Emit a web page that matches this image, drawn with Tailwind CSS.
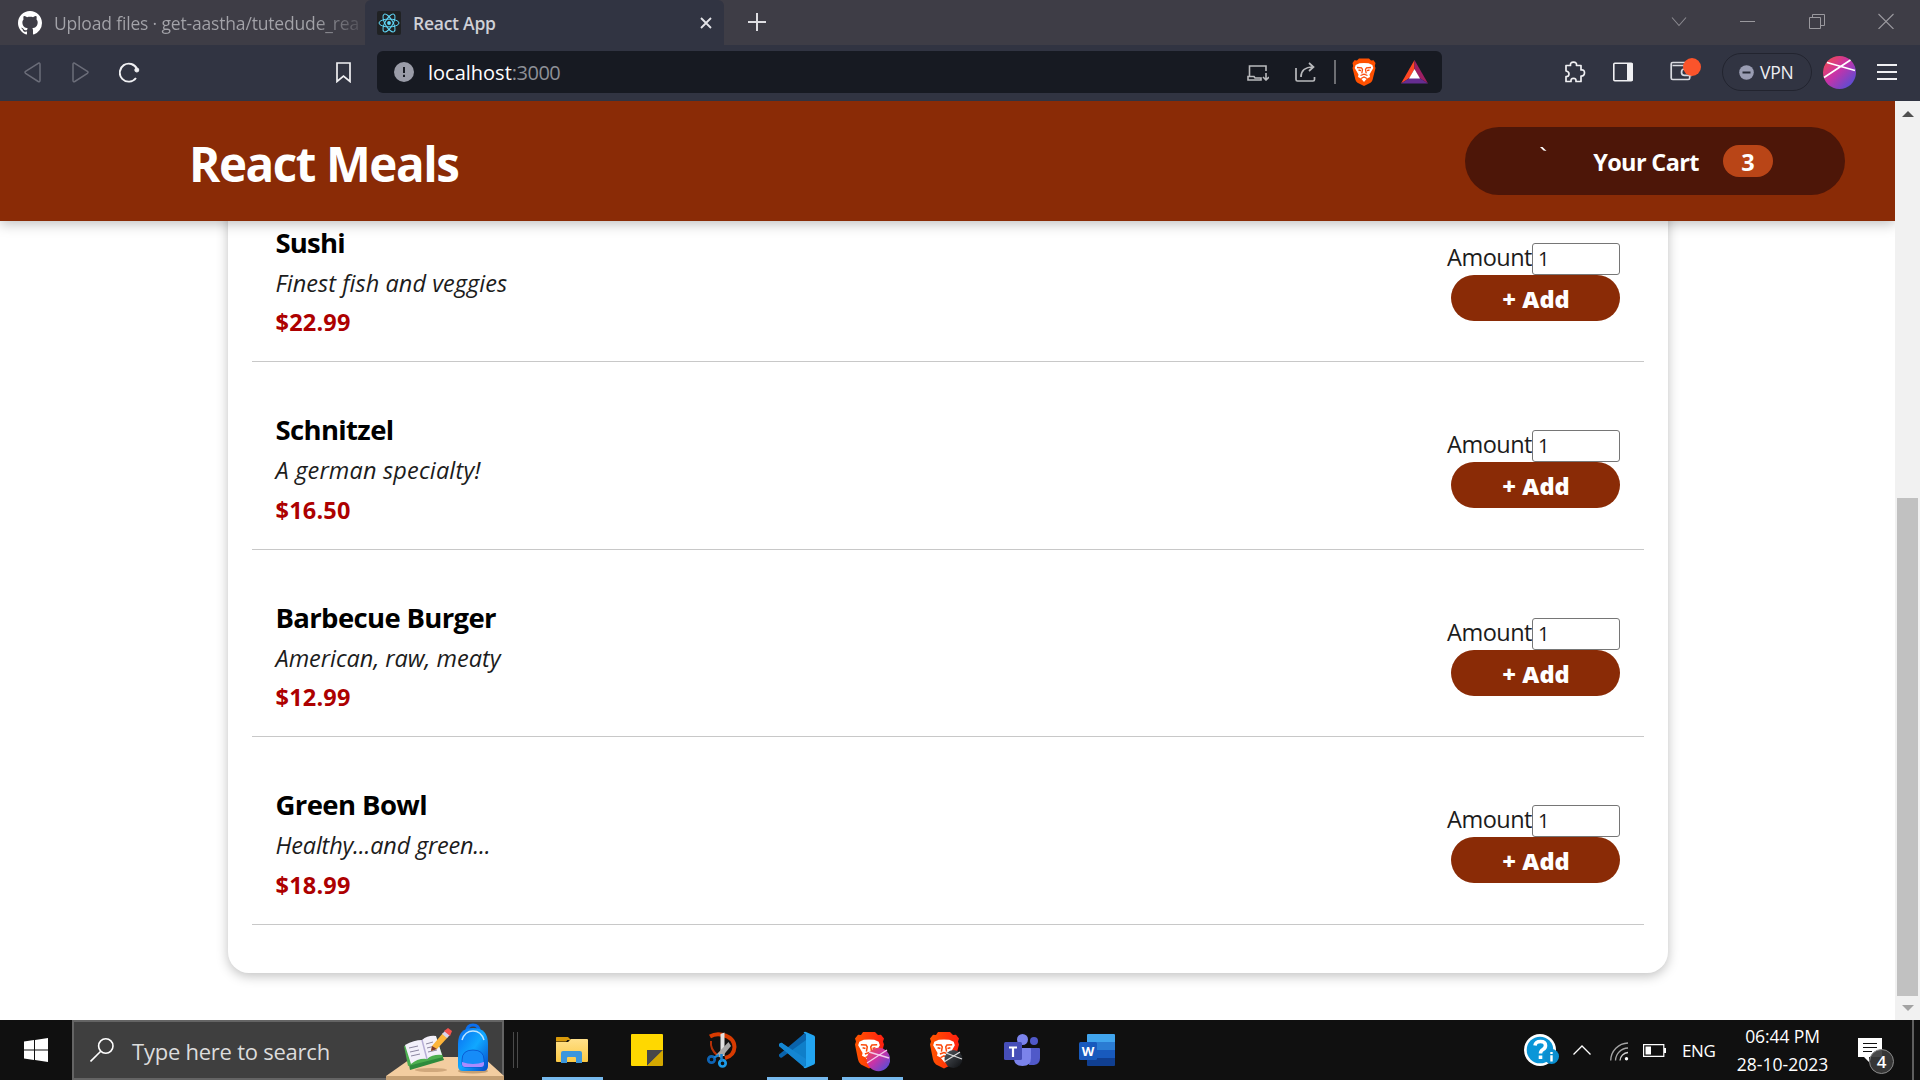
<!DOCTYPE html>
<html lang="en">
<head>
<meta charset="utf-8">
<title>React App</title>
<script src="https://cdn.jsdelivr.net/npm/@tailwindcss/browser@4"></script>
</head>
<body class="w-[1920px] h-[1080px] overflow-hidden flex flex-col bg-white font-['Open_Sans','Noto_Sans',sans-serif]">

<!-- shared symbols -->
<svg class="absolute w-0 h-0">
  <defs>
    <linearGradient id="ball" x1="0" y1="0" x2="1" y2="1"><stop offset="0" stop-color="#f9503e"/><stop offset=".45" stop-color="#c832a8"/><stop offset="1" stop-color="#3a55e0"/></linearGradient>
    <linearGradient id="dark" x1="0" y1="0" x2="1" y2="1"><stop offset="0" stop-color="#555a60"/><stop offset="1" stop-color="#0b0d10"/></linearGradient>
    <linearGradient id="fold" x1="0" y1="0" x2="0" y2="1"><stop offset="0" stop-color="#ffe08a"/><stop offset="1" stop-color="#fbc944"/></linearGradient>
    <linearGradient id="bag" x1="0" y1="0" x2="1" y2="1"><stop offset="0" stop-color="#0a6cf0"/><stop offset=".5" stop-color="#10a8ff"/><stop offset="1" stop-color="#0648c8"/></linearGradient>
    <linearGradient id="lionRed" x1="0" y1="0" x2="1" y2="0"><stop offset="0" stop-color="#ff5500"/><stop offset="1" stop-color="#ff1f10"/></linearGradient>
    <symbol id="lionFace" viewBox="0 0 24 28">
      <path d="M7.500 5.200 12 5l4.500.2 3.800 1.800 1 3-3.800 6.500.5 2.500-3 1.500L12 24l-3-3.500-3-1.500.5-2.500L2.700 10l1-3z" fill="#fff"/>
    </symbol>
    <symbol id="lionLines" viewBox="0 0 24 28">
      <path d="M5 9.500l4.500.3 1 1.500-.7 4M19 9.500l-4.500.3-1 1.500.7 4M8.500 17.500L12 16.200l3.500 1.300M9 20.500l3-1.500 3 1.500M6.500 12l2.500.7M17.500 12l-2.500.7" stroke="#fb4a0c" stroke-width="1.300" fill="none"/>
    </symbol>
  </defs>
</svg>

<!-- tab strip -->
<div class="h-[45px] shrink-0 flex bg-[#3e3d46]">
  <div class="w-[365px] flex items-center pl-[18px]">
    <svg class="w-6 h-6 shrink-0" viewBox="0 0 16 16" fill="#fff"><path d="M8 0C3.580 0 0 3.580 0 8c0 3.540 2.290 6.530 5.470 7.590.4.070.55-.17.55-.38 0-.19-.01-.82-.01-1.490-2.010.37-2.530-.49-2.690-.94-.09-.23-.48-.94-.82-1.130-.28-.15-.68-.52-.01-.53.63-.01 1.080.58 1.230.82.72 1.210 1.870.87 2.330.66.07-.52.28-.87.51-1.070-1.780-.2-3.640-.89-3.640-3.950 0-.87.31-1.590.82-2.150-.08-.2-.36-1.020.08-2.120 0 0 .67-.21 2.200.82.64-.18 1.320-.27 2-.27s1.360.09 2 .27c1.530-1.040 2.200-.82 2.200-.82.44 1.100.16 1.920.08 2.120.51.56.82 1.270.82 2.150 0 3.070-1.870 3.750-3.650 3.950.29.25.54.73.54 1.480 0 1.070-.01 1.930-.01 2.200 0 .21.15.46.55.38A8.010 8.010 0 0 0 16 8c0-4.420-3.580-8-8-8"/></svg>
    <div class="ml-3 w-[306px] overflow-hidden whitespace-nowrap text-[17.500px] leading-6 tracking-[-0.17px] bg-linear-to-r from-[#a3a3a9] from-85% to-[#a3a3a9]/20 bg-clip-text text-transparent">Upload files · get-aastha/tutedude_rea</div>
  </div>
  <div class="w-[359px] flex items-center bg-[#313442] rounded-t-md pl-3 pr-3">
    <svg class="w-6 h-6" viewBox="0 0 24 24"><rect width="24" height="24" rx="2" fill="#202224"/><g fill="none" stroke="#61dafb" stroke-width="1"><ellipse cx="12" cy="12" rx="10" ry="3.900"/><ellipse cx="12" cy="12" rx="10" ry="3.900" transform="rotate(60 12 12)"/><ellipse cx="12" cy="12" rx="10" ry="3.900" transform="rotate(120 12 12)"/></g><circle cx="12" cy="12" r="1.900" fill="#61dafb"/></svg>
    <div class="ml-3 text-[17.500px] leading-6 font-semibold tracking-[-0.25px] text-[#cfd0d6]">React App</div>
    <svg class="ml-auto w-3 h-3" viewBox="0 0 12 12" stroke="#e4e4e8" stroke-width="1.800"><path d="M1 1l10 10M11 1L1 11"/></svg>
  </div>
  <svg class="ml-6 mt-[13px] w-[18px] h-[18px]" viewBox="0 0 18 18" stroke="#dedee2" stroke-width="2"><path d="M0 9h18M9 0v18"/></svg>
  <div class="ml-auto mr-[26px] mt-[13px] flex gap-[53px]">
    <svg class="w-4 h-4" viewBox="0 0 16 16" fill="none" stroke="#8b8a90" stroke-width="1.100"><path d="M1 4.500l7 8 7-8"/></svg>
    <svg class="w-4 h-4" viewBox="0 0 16 16" fill="none" stroke="#9a999e"><path d="M0 8.500h15"/></svg>
    <svg class="w-4 h-4" viewBox="0 0 16 16" fill="none" stroke="#9a999e"><path d="M.5 4.500h11v11H.5zM3.500 4.500v-3h12v11h-4"/></svg>
    <svg class="w-4 h-4" viewBox="0 0 16 16" fill="none" stroke="#9a999e" stroke-width="1.100"><path d="M.5 1l15 15M15.500 1l-15 15"/></svg>
  </div>
</div>

<!-- toolbar -->
<div class="h-14 shrink-0 flex items-center bg-[#313442] pb-0.5">
  <svg class="ml-6 w-[17px] h-[21px]" viewBox="0 0 17 21" fill="none" stroke="#6b6d79" stroke-width="1.500"><path d="M14.200 1.300L1.600 9.300q-1.300 1 0 2l12.600 8.200q1.800.8 1.800-1V2.200q0-1.700-1.800-.9z"/></svg>
  <svg class="ml-[31px] w-[17px] h-[21px]" viewBox="0 0 17 21" fill="none" stroke="#6b6d79" stroke-width="1.500"><path d="M2.800 1.300l12.600 8q1.300 1 0 2L2.800 19.500q-1.800.8-1.800-1V2.200q0-1.700 1.800-.9z"/></svg>
  <svg class="ml-[30px] w-[21px] h-[21px]" viewBox="0 0 21 21" fill="none" stroke="#f0f0f3" stroke-width="1.900"><path d="M17 16A9 9 0 1 1 18 7"/><circle cx="17.800" cy="8" r="2" fill="#f0f0f3" stroke-width="1"/></svg>
  <svg class="ml-[196px] w-[15px] h-[21px]" viewBox="0 0 15 21" fill="none" stroke="#f0f0f3" stroke-width="1.700"><path d="M1 1h13v18.500l-6.500-5.500L1 19.500z"/></svg>
  <div class="ml-[26px] w-[1065px] h-[42px] rounded-md bg-[#171a22] flex items-center pl-[17px] pr-[14px]">
    <svg class="w-5 h-5" viewBox="0 0 20 20"><circle cx="10" cy="10" r="10" fill="#9a9ca8"/><path d="M10 5v6M10 12.700v2.300" stroke="#171a22" stroke-width="2"/></svg>
    <div class="ml-[14px] text-[20px] leading-6 text-[#8e9097] pt-px"><span class="text-white">localhost</span><span class="tracking-[-0.5px]">:3000</span></div>
    <svg class="ml-auto w-[22px] h-4 mt-0.5" viewBox="0 0 22 16" fill="none" stroke="#b9babd" stroke-width="1.600"><path d="M2.500 11V1h16.500v5M1 11.500v3.500h13v-2H8l-1-1.500zM19 8v7M16 12l3 3 3-3"/></svg>
    <svg class="ml-[26px] w-[21px] h-[20px]" viewBox="0 0 21 20" fill="none" stroke="#b9babd" stroke-width="1.700"><path d="M1 6v11.500q0 1.500 1.500 1.500h15.500q1.500 0 1.500-1.500V15M6 15c0-6 4-10 12-10M14 1l4.500 4L14 9"/></svg>
    <div class="ml-[18px] w-0.5 h-6 bg-[#6d6e73]"></div>
    <svg class="ml-4 w-6 h-7" viewBox="0 0 24 28"><path d="M7 .5h10l2 2 2.500-.3L23.500 5l-.7 3 .7 2-3 12q-.5 1.500-2 2.700L12 28l-6.500-3.300Q4 23.500 3.500 22L.5 10l.7-2-.7-3 2-2.800 2.500.3z" fill="#ff5000"/><use href="#lionFace"/><use href="#lionLines"/></svg>
    <svg class="ml-[25px] w-[27px] h-6" viewBox="0 0 27 24"><path d="M13.500 0L0 23.500 8.500 18l5-9z" fill="#ff4724"/><path d="M13.500 0L27 23.500 18.500 18l-5-9z" fill="#9e1f63"/><path d="M0 23.500h27L18.500 18h-10z" fill="#662d91"/><path d="M13.500 9l5.500 9.500H8z" fill="#fff"/></svg>
  </div>
  <svg class="ml-[122px] w-[22px] h-[22px]" viewBox="0 0 22 22" fill="none" stroke="#f0f0f3" stroke-width="1.700" stroke-linejoin="round"><path d="M2 4.500h4.500Q6 1.200 9.500 1.200T12.500 4.500H17V9q3.500-.5 3.500 2.800T17 15v5.500h-5q.3-3.200-2.500-3.200T7 20.500H2v-5q3 .2 3-2.500T2 10z"/></svg>
  <svg class="ml-[27px] w-5 h-5" viewBox="0 0 20 20"><rect x=".8" y="1.300" width="18.400" height="17.400" rx="1" fill="none" stroke="#f0f0f3" stroke-width="1.600"/><path d="M14 1h5.500v18H14z" fill="#f0f0f3"/></svg>
  <svg class="ml-[37px] w-8 h-7 -mt-0.5" viewBox="0 0 32 28" fill="none" stroke="#d9dae0" stroke-width="1.700"><path d="M20 11V8.500H2.500M1.200 7v14q0 1.500 1.500 1.500h15.500q1.500 0 1.500-1.500v-2.500M18 5.500H2.700Q1.200 5.500 1.200 7M21 12h-6.500q-3 0-3 3.200t3 3.200H21z"/><circle cx="22" cy="10" r="9" fill="#fb542b" stroke="none"/></svg>
  <div class="ml-5 w-[90px] h-[38px] rounded-full border border-[#22242f] flex items-center pl-4">
    <svg class="w-[15px] h-[15px]" viewBox="0 0 15 15"><circle cx="7.500" cy="7.500" r="7.300" fill="#9a9db3"/><path d="M3.500 7.500h8" stroke="#272a37" stroke-width="2"/></svg>
    <div class="ml-[6px] text-[17.500px] leading-6 tracking-[-0.2px] text-[#eeeef2]">VPN</div>
  </div>
  <svg class="ml-[11px] w-[33px] h-[33px]" viewBox="0 0 33 33"><circle cx="16.500" cy="16.500" r="16.500" fill="url(#ball)"/><path d="M4 6.500l28 8M27.500 4L1 21.500" stroke="#fff" stroke-width="1.700"/></svg>
  <svg class="ml-[21px] w-5 h-4" viewBox="0 0 20 16" stroke="#f0f0f3" stroke-width="1.800"><path d="M0 1h20M0 8h20M0 15h20"/></svg>
</div>

<!-- page -->
<div class="h-[919px] shrink-0 flex">
  <div class="w-[1895px] overflow-hidden flex flex-col">
    <header class="relative z-10 h-[120px] shrink-0 flex items-center justify-between bg-[#8a2b06] pl-[189px] pr-[50px] shadow-[0_3px_12px_rgba(0,0,0,0.25)] text-white">
      <h1 class="text-[47.500px] leading-[60px] font-bold tracking-[-1.420px] pt-[5px]">React Meals</h1>
      <button class="w-[380px] h-[68px] rounded-full bg-[#4d1608] font-bold text-[23.500px] leading-8 flex items-center pl-[75px]">
        <svg class="w-[7px] h-1 -mt-[25px]" viewBox="0 0 7 4"><path d="M0 0h2.500L6.500 4l-3-.5z" fill="#fff"/></svg>
        <span class="ml-[45px] w-[108px] whitespace-nowrap tracking-[-0.65px] pt-[2px]">Your Cart</span>
        <span class="ml-[23px] w-[50px] h-8 rounded-full bg-[#b94517] text-center leading-[35px]">3</span>
      </button>
    </header>
    <section class="mx-[228px] w-[1440px] -mt-[71px] pt-[24.500px] pb-12 px-6 rounded-[21px] bg-white text-black shadow-[0_3px_12px_rgba(0,0,0,0.25)]">
      <ul>
        <li class="h-[187.500px] border-b border-[#c8c8c8] pl-[23.500px] pr-6 flex justify-between">
          <div class="pt-[50px]">
            <h3 class="text-[27.500px] leading-9 font-bold tracking-[-0.8px]">Sushi</h3>
            <p class="mt-[2px] text-[23.500px] leading-10 italic text-[#1c1c1c] tracking-[0.05px]">Finest fish and veggies</p>
            <p class="mt-[0.500px] text-[23.500px] leading-[38px] font-bold text-[#ad0000] tracking-[0.2px]">$22.99</p>
          </div>
          <div class="pt-[68px] flex flex-col items-end">
            <div class="flex text-[#1c1c1c]"><label class="text-[23.500px] leading-[28px] tracking-[-0.5px]">Amount</label><div class="w-[88px] h-8 border border-[#767676] rounded-[3px] pl-[5px] text-[20px] leading-[29px]">1</div></div>
            <button class="w-[169px] h-[46px] rounded-full bg-[#8a2b06] text-white text-[23.500px] leading-[48px] font-extrabold tracking-[0.1px] pl-px">+ Add</button>
          </div>
        </li>
        <li class="h-[187.500px] border-b border-[#c8c8c8] pl-[23.500px] pr-6 flex justify-between">
          <div class="pt-[50px]">
            <h3 class="text-[27.500px] leading-9 font-bold tracking-[-0.65px]">Schnitzel</h3>
            <p class="mt-[2px] text-[23.500px] leading-10 italic text-[#1c1c1c] tracking-[0.18px]">A german specialty!</p>
            <p class="mt-[0.500px] text-[23.500px] leading-[38px] font-bold text-[#ad0000] tracking-[0.2px]">$16.50</p>
          </div>
          <div class="pt-[68px] flex flex-col items-end">
            <div class="flex text-[#1c1c1c]"><label class="text-[23.500px] leading-[28px] tracking-[-0.5px]">Amount</label><div class="w-[88px] h-8 border border-[#767676] rounded-[3px] pl-[5px] text-[20px] leading-[29px]">1</div></div>
            <button class="w-[169px] h-[46px] rounded-full bg-[#8a2b06] text-white text-[23.500px] leading-[48px] font-extrabold tracking-[0.1px] pl-px">+ Add</button>
          </div>
        </li>
        <li class="h-[187.500px] border-b border-[#c8c8c8] pl-[23.500px] pr-6 flex justify-between">
          <div class="pt-[50px]">
            <h3 class="text-[27.500px] leading-9 font-bold tracking-[-0.65px]">Barbecue Burger</h3>
            <p class="mt-[2px] text-[23.500px] leading-10 italic text-[#1c1c1c] tracking-[-0.02px]">American, raw, meaty</p>
            <p class="mt-[0.500px] text-[23.500px] leading-[38px] font-bold text-[#ad0000] tracking-[0.2px]">$12.99</p>
          </div>
          <div class="pt-[68px] flex flex-col items-end">
            <div class="flex text-[#1c1c1c]"><label class="text-[23.500px] leading-[28px] tracking-[-0.5px]">Amount</label><div class="w-[88px] h-8 border border-[#767676] rounded-[3px] pl-[5px] text-[20px] leading-[29px]">1</div></div>
            <button class="w-[169px] h-[46px] rounded-full bg-[#8a2b06] text-white text-[23.500px] leading-[48px] font-extrabold tracking-[0.1px] pl-px">+ Add</button>
          </div>
        </li>
        <li class="h-[187.500px] border-b border-[#c8c8c8] pl-[23.500px] pr-6 flex justify-between">
          <div class="pt-[50px]">
            <h3 class="text-[27.500px] leading-9 font-bold tracking-[-0.6px]">Green Bowl</h3>
            <p class="mt-[2px] text-[23.500px] leading-10 italic text-[#1c1c1c] tracking-[-0.2px]">Healthy...and green...</p>
            <p class="mt-[0.500px] text-[23.500px] leading-[38px] font-bold text-[#ad0000] tracking-[0.2px]">$18.99</p>
          </div>
          <div class="pt-[68px] flex flex-col items-end">
            <div class="flex text-[#1c1c1c]"><label class="text-[23.500px] leading-[28px] tracking-[-0.5px]">Amount</label><div class="w-[88px] h-8 border border-[#767676] rounded-[3px] pl-[5px] text-[20px] leading-[29px]">1</div></div>
            <button class="w-[169px] h-[46px] rounded-full bg-[#8a2b06] text-white text-[23.500px] leading-[48px] font-extrabold tracking-[0.1px] pl-px">+ Add</button>
          </div>
        </li>
      </ul>
    </section>
  </div>
  <!-- scrollbar -->
  <div class="w-[25px] bg-[#f1f1f1] flex flex-col items-center">
    <svg class="mt-[10px] w-3 h-[6px]" viewBox="0 0 12 6"><path d="M6 0l6 6H0z" fill="#505050"/></svg>
    <div class="mt-[381px] w-[21px] h-[498px] bg-[#c1c1c1]"></div>
    <svg class="mt-[9px] w-3 h-[6px]" viewBox="0 0 12 6"><path d="M6 6l6-6H0z" fill="#a3a3a3"/></svg>
  </div>
</div>

<!-- taskbar -->
<div class="h-[60px] shrink-0 flex bg-[#101010] text-white">
  <div class="w-[72px] flex items-center justify-center">
    <svg class="w-6 h-6" viewBox="0 0 24 24" fill="#fff"><path d="M0 3.400l10-1.400v9.500H0zM11 1.900L24 0v11.500H11zM0 12.500h10V22L0 20.600zM11 12.500h13V24l-13-1.900z"/></svg>
  </div>
  <div class="w-[432px] h-[60px] bg-[#3f3f3f] border-2 border-[#646464] flex items-center pl-4">
    <svg class="w-6 h-6 shrink-0" viewBox="0 0 24 24" fill="none" stroke="#fff" stroke-width="1.600"><circle cx="15.800" cy="8" r="7.200"/><path d="M10.500 13.500L.5 23.500"/></svg>
    <div class="ml-[18px] text-[22px] leading-8 tracking-[-0.240px] whitespace-nowrap text-[#dcdcdc] pt-px">Type here to search</div>
    <svg class="ml-auto -mr-0.5 w-[118px] h-[60px] shrink-0" viewBox="0 0 118 60">
      <path d="M0 56L27 37h70l21 19z" fill="#f3cda0"/><path d="M0 56h118v4H0z" fill="#c49f73"/>
      <ellipse cx="45" cy="50" rx="16" ry="2" fill="#d0a87c"/>
      <path d="M20 29l4 21 34-10-2-5z" fill="#2e8b3d"/><path d="M18 26l4 20 35-9-7-20z" fill="#4cae4f"/>
      <path d="M19 25q9-5 17-5 6-5 14-4l6 19q-9-1-15 4-9-1-16 5z" fill="#f3f0fa"/><path d="M36 20l5 19" stroke="#b7aed6" stroke-width="1.500"/>
      <path d="M23 28l9-2M24 32l9-2M25 36l9-2M40 24l7-2M41 28l8-2M42 32l9-2" stroke="#8b86a0"/>
      <path d="M46 26l11-13 5 4-11 12-6 2z" fill="#fdb53a"/><path d="M56 14l3-3 5 4-3 3z" fill="#d8d4ea"/><path d="M58 11l4-3 4 3-2 5z" fill="#f4524d"/><path d="M46 26l5 3-6 2z" fill="#7d3a2f"/>
      <ellipse cx="87" cy="51" rx="15" ry="2.500" fill="#c49f73"/>
      <path d="M81 11q0-6 6-6t6 6" fill="none" stroke="#0a6ff0" stroke-width="3"/>
      <path d="M72 46V24Q72 8 87 8t15 16v22q0 5-5 5H77q-5 0-5-5z" fill="url(#bag)"/>
      <path d="M76 20q3-9 11-9t11 9" fill="none" stroke="#bfe6ff" stroke-width="1.500"/>
      <path d="M76 44v-4q0-10 11-10t11 10v4q0 3-3 3H79q-3 0-3-3z" fill="#168cf8" stroke="#0750cc" stroke-width=".8"/><path d="M76 42v2q0 3 3 3h16q3 0 3-3v-2q-11 4-22 0z" fill="#a98bff"/>
    </svg>
  </div>
  <div class="ml-[9px] w-[5px] h-9 mt-3 border-x border-[#4a4a4a]"></div>
  <div class="ml-[16.500px] flex">
    <div class="w-[75px] flex flex-col items-center">
      <svg class="h-[57px] w-9" viewBox="0 0 36 57"><path d="M2 18q0-1 1-1h11l3 3H2z" fill="#d99a0b"/><path d="M2 22h12l3-3h16q1 0 1 1v21q0 1-1 1H3q-1 0-1-1z" fill="url(#fold)"/><path d="M2 17.500h11q2 0 1 1.500t-2 2.500H2z" fill="#d99a0b"/><path d="M7 43V33q0-2 2-2h17q2 0 2 2v10h-6v-5q0-1-1-1h-7q-1 0-1 1v5z" fill="#3a96dd"/></svg>
      <div class="w-[61px] h-[3px] bg-[#76b9ed]"></div>
    </div>
    <div class="w-[75px] flex justify-center"><svg class="w-8 h-[60px]" viewBox="0 0 32 60"><path d="M0 15q0-1 1-1h30q1 0 1 1v15L17 46H1q-1 0-1-1z" fill="#ffd800"/><path d="M16 30h16L16 46z" fill="#47474a"/><path d="M32 30v15q0 1-1 1H16z" fill="#d4a800"/></svg></div>
    <div class="w-[75px] flex justify-center"><svg class="w-[30px] h-[60px]" viewBox="0 0 30 60" fill="none"><path d="M3 16.500q6-3.500 13-1.500 11 2.500 11.500 12-.5 9-9.500 11" stroke="#d83b01" stroke-width="4"/><path d="M4 21q-1 8 6 14" stroke="#b33008" stroke-width="2"/><path d="M13.500 14l4-1.500V36h-4z" fill="#e2e2e2"/><path d="M21.500 22l2.500 4-10 12-5-3z" fill="#a8a8a8"/><circle cx="4.500" cy="39.500" r="3.200" stroke="#0f64b4" stroke-width="2.700"/><circle cx="15.500" cy="43.300" r="3.200" stroke="#1c9be8" stroke-width="2.700"/><path d="M7 37.500l5-2.500M14.500 41v-7" stroke="#1783d4" stroke-width="2.500"/></svg></div>
    <div class="w-[75px] flex flex-col items-center">
      <svg class="w-9 h-[57px]" viewBox="0 0 36 57"><path d="M27 12L10 28.500 3 23q-1-.7-2 .3l-1 1q-.8 1 0 1.800L27 48l1-10z" fill="#0f7fc9"/><path d="M0 34.500q-.8.8 0 1.700l1 1q1 1 2 .3L27 20V12L8 28z" fill="#0a63ab"/><path d="M0 24.300q-.8 1 0 1.800L26 48l1-9L3 23q-1-.7-2 .3z" fill="#1486d2"/><path d="M27 12l8 3.500q1 .5 1 1.800v25.500q0 1.200-1 1.700L27 48q-1.500.5-2.500-.5L27 46V14l-2.500-1.500q1-1 2.500-.5z" fill="#22a5f1"/></svg>
      <div class="w-[61px] h-[3px] bg-[#76b9ed]"></div>
    </div>
    <div class="w-[75px] flex flex-col items-center">
      <svg class="w-9 h-[57px]" viewBox="0 0 36 57"><path d="M9 12h12l3 3 3-.3 3 3.800-1 3 1 3-4 15q-.6 3-3 5l-8 4-8-4q-2.500-2-3-5L1 24.500l1-3-1-3 3-3.800 3 .3z" fill="url(#lionRed)"/><svg x="1" y="13" width="28" height="34" viewBox="0 0 24 28"><use href="#lionFace"/><use href="#lionLines"/></svg><circle cx="24.500" cy="39.500" r="11.700" fill="url(#ball)"/><path d="M15 32l20 6M33 30L13 43" stroke="#f3c8ea" stroke-width="1.400"/></svg>
      <div class="w-[61px] h-[3px] bg-[#76b9ed]"></div>
    </div>
    <div class="w-[75px] flex justify-center"><svg class="w-9 h-[60px]" viewBox="0 0 36 60"><path d="M9 12h12l3 3 3-.3 3 3.800-1 3 1 3-4 15q-.6 3-3 5l-8 4-8-4q-2.500-2-3-5L1 24.500l1-3-1-3 3-3.800 3 .3z" fill="url(#lionRed)"/><svg x="1" y="13" width="28" height="34" viewBox="0 0 24 28"><use href="#lionFace"/><use href="#lionLines"/></svg><circle cx="24.500" cy="39" r="9" fill="url(#dark)"/><path d="M17 33l16 6M31 32L15 42" stroke="#ddd" stroke-width="1.200"/></svg></div>
    <div class="w-[75px] flex justify-center"><svg class="w-9 h-[60px]" viewBox="0 0 36 60"><circle cx="30" cy="21" r="4" fill="#5059c9"/><path d="M25 28h10q1 0 1 1v9q0 6-6 7h-5z" fill="#5059c9"/><circle cx="18.500" cy="19.500" r="5.500" fill="#7b83eb"/><path d="M10 28h16q1 0 1 1v9q0 8-8.500 8T10 38z" fill="#7b83eb"/><rect x="0" y="22" width="18" height="18" rx="1.500" fill="#464eb8"/><path d="M5 26.500h8v2h-2.900V37H7.900v-8.500H5z" fill="#fff"/></svg></div>
    <div class="w-[75px] flex justify-center"><svg class="w-9 h-[60px]" viewBox="0 0 36 60"><path d="M8 15q0-1 1-1h26q1 0 1 1v7H8z" fill="#41a5ee"/><path d="M8 22h28v8H8z" fill="#2b7cd3"/><path d="M8 30h28v8H8z" fill="#185abd"/><path d="M8 38h28v7q0 1-1 1H9q-1 0-1-1z" fill="#103f91"/><rect x="0" y="22" width="18" height="18" rx="1.500" fill="#185abd"/><text x="9" y="36" text-anchor="middle" font-family="Open Sans" font-size="13" font-weight="700" fill="#fff">W</text></svg></div>
  </div>
  <!-- tray -->
  <div class="ml-auto flex items-center">
    <svg class="w-9 h-9" viewBox="0 0 36 36"><circle cx="16" cy="18" r="16" fill="#fff"/><circle cx="16" cy="18" r="13.300" fill="#0a96d8"/><path d="M11 13.500q.5-4 5.500-4t5 4q0 2.500-2.500 4t-2.500 4M16.500 23.500v3.500" fill="none" stroke="#fff" stroke-width="3.600"/><circle cx="27.500" cy="24.500" r="7.500" fill="#0a8fd0"/><path d="M27.500 20v2M27.500 23.200v6.300" stroke="#fff" stroke-width="2.400"/></svg>
    <svg class="ml-[13px] w-[18px] h-[10px]" viewBox="0 0 18 10" fill="none" stroke="#fff" stroke-width="1.300"><path d="M.5 9.500L9 1l8.500 8.500"/></svg>
    <svg class="ml-[19px] w-[19px] h-[19px] mt-0.5" viewBox="0 0 19 19" fill="none" stroke-width="1.300"><path d="M.7 18.500A17.800 17.800 0 0 1 18 1M5.500 18.500A13 13 0 0 1 18 6" stroke="#a5a5a5"/><path d="M10 18.500A8.500 8.500 0 0 1 18 10.500" stroke="#ccc"/><circle cx="16.500" cy="16.800" r="1.700" fill="#fff"/></svg>
    <svg class="ml-[14px] w-[23px] h-[13px]" viewBox="0 0 23 13"><path d="M.6.6h20.200v11.800H.6z" fill="none" stroke="#fff" stroke-width="1.200"/><path d="M2.500 2.500H8v8H2.500zM21 4h2v5h-2z" fill="#fff"/></svg>
    <div class="ml-[16px] w-[36px] text-[17px] leading-6 tracking-[-0.4px] pt-px">ENG</div>
    <div class="ml-[14px] w-[101px] text-center text-[17.500px] leading-[28px]"><div class="tracking-[-0.1px]">06:44 PM</div><div>28-10-2023</div></div>
    <svg class="ml-[24px] w-[38px] h-9 mt-3" viewBox="0 0 38 36"><path d="M1 0h24v19H12v5l-5-5H1z" fill="#fff"/><path d="M6 5.500h14M6 9.500h14M6 13.500h9" stroke="#101010" stroke-width="1.200"/><circle cx="24.500" cy="23.500" r="12" fill="#3a3a3a" fill-opacity=".92" stroke="#8a8a8a"/><text x="24.500" y="29.500" text-anchor="middle" font-family="Open Sans" font-size="17" font-weight="600" fill="#fff">4</text></svg>
    <div class="ml-[17px] w-0.5 h-[60px] mr-[6px] bg-[#5e5e5e]"></div>
  </div>
</div>
</body>
</html>
